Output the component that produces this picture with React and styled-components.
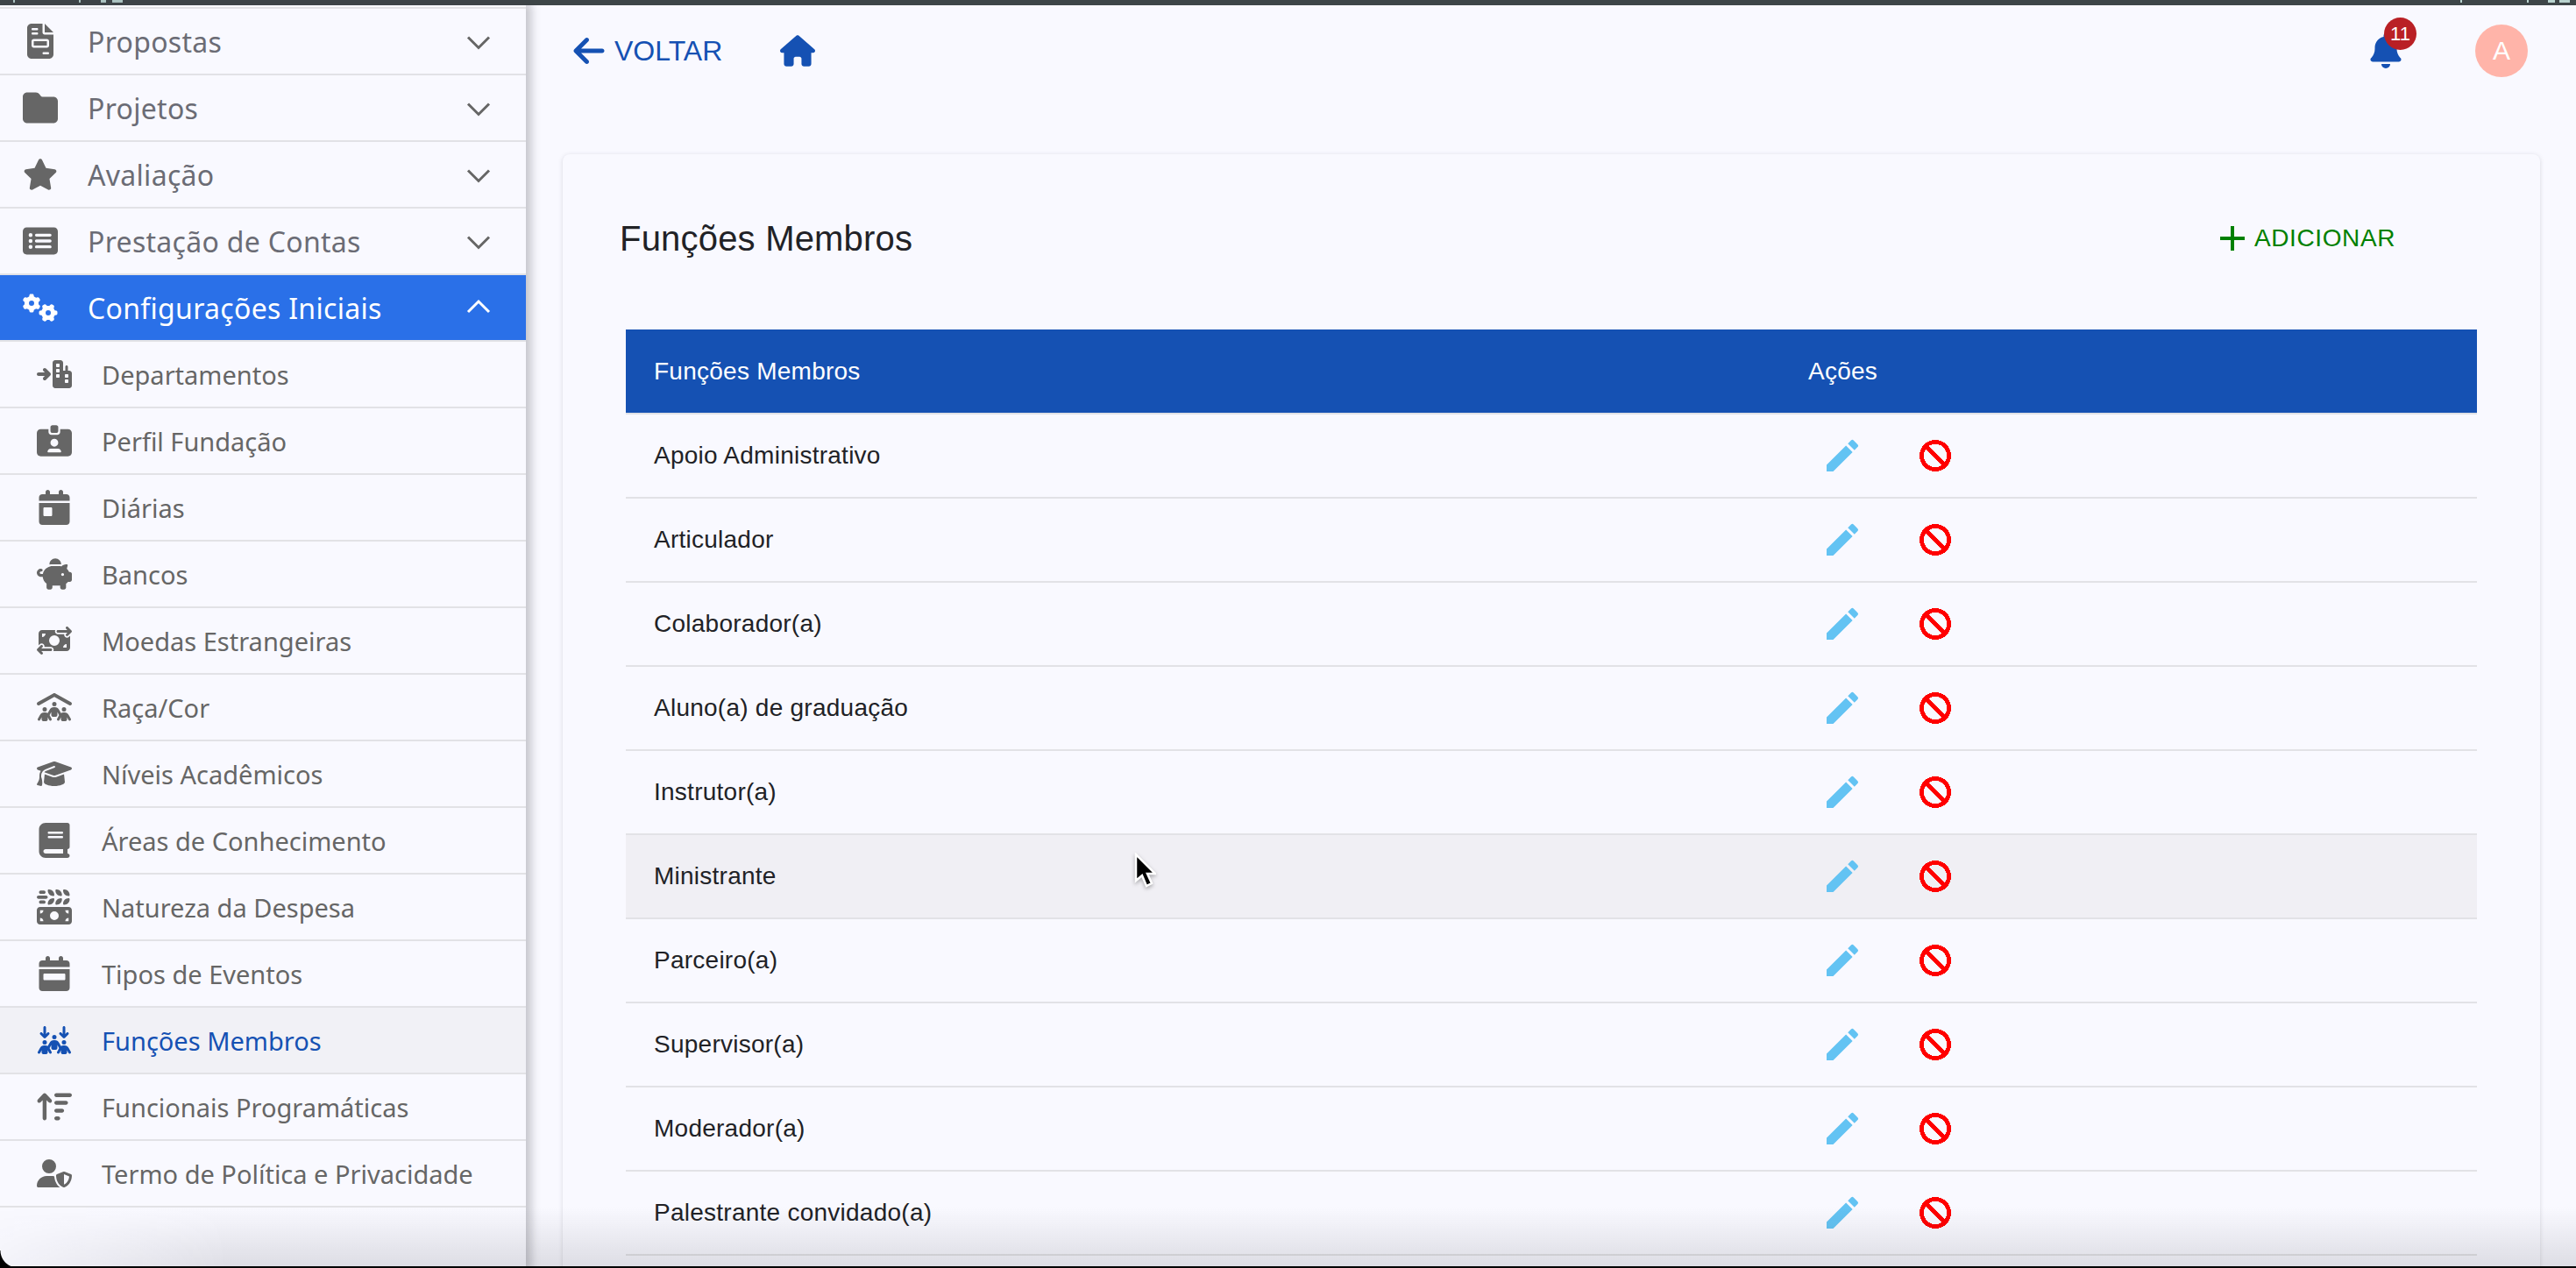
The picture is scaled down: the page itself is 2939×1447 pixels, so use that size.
import styled, { createGlobalStyle } from "styled-components";
import {
  FaFileInvoice, FaFolder, FaStar, FaRectangleList, FaGears, FaArrowRightToCity, FaIdCardClip,
  FaCalendarDay, FaPiggyBank, FaMoneyBillTransfer, FaPeopleRoof, FaGraduationCap, FaBook,
  FaMoneyBillWheat, FaCalendarWeek, FaArrowsDownToPeople, FaArrowUpWideShort, FaUserShield,
  FaArrowLeft, FaHouse, FaBell,
} from "react-icons/fa6";
import { MdEdit, MdAdd } from "react-icons/md";

const GlobalStyle = createGlobalStyle`
  html, body {
    margin: 0;
    height: 100%;
    overflow: hidden;
    background: #f9f9ff;
    font-family: "Liberation Sans", Arial, sans-serif;
  }
  #root { height: 100%; }
`;

const Frame = styled.div`
  position: relative;
  height: 100vh;
  display: flex;
  flex-direction: column;
  overflow: hidden;
`;

const TopStrip = styled.div`
  position: relative;
  flex: 0 0 6px;
  background: #3e4648;
`;

// restos do texto da janela de cima
const Speck = styled.i`
  position: absolute;
  top: 0;
  left: ${props => props.$left}px;
  width: ${props => props.$width}px;
  height: 3px;
  background: #b9d3cf;
`;

const Body = styled.div`
  flex: 1;
  min-height: 0;
  display: flex;
`;

/* menu lateral */
const Sidebar = styled.nav`
  flex: 0 0 600px;
  position: relative;
  z-index: 2;
  padding-top: 2px;
  background: #f9f9ff;
  box-shadow: 3px 0 10px 3px rgba(60, 60, 70, 0.28);
  font-family: "Noto Sans", sans-serif;
`;

const Row = styled.div`
  display: flex;
  align-items: center;
  height: 74px;
  border-top: ${props => (props.$first ? "2px solid #e2e2e6" : "none")};
  border-bottom: 2px solid #e2e2e6;
  padding-left: ${props => (props.$sub ? "42px" : "26px")};
  background: ${props => (props.$open ? "#2a70e8" : props.$current ? "#f1f1f6" : "transparent")};
  color: ${props => (props.$open ? "#fff" : props.$current ? "#1551b3" : props.$sub ? "#666" : "#6b6c75")};
`;

const RowIcon = styled.span`
  flex: 0 0 40px;
  height: 40px;
  display: flex;
  align-items: center;
  justify-content: center;
  margin-right: 34px;
  color: ${props => (props.$open ? "#fff" : props.$current ? "#1551b3" : "#666")};
  svg { width: 40px; height: 40px; }
`;

const RowLabel = styled.span`
  flex: 1;
  font-size: ${props => (props.$sub ? "29px" : "32px")};
  letter-spacing: ${props => (props.$sub ? "0" : "0.3px")};
  white-space: nowrap;
`;

const Chevron = styled.svg`
  flex: 0 0 48px;
  width: 48px;
  height: 48px;
  margin-right: 30px;
  fill: none;
  stroke: ${props => (props.$open ? "#fff" : "#666")};
  stroke-width: 3;
`;

/* conteudo */
const Main = styled.main`
  flex: 1;
  min-width: 0;
  padding: 0 41px 0 42px;
  background: #f9f9ff;
`;

const TopBar = styled.header`
  display: flex;
  align-items: center;
  height: 104px;
  margin-bottom: 66px;
  padding-left: 10px;
  color: #1551b3;
`;

const BackLink = styled.a`
  display: flex;
  align-items: center;
  gap: 9px;
  font-size: 32px;
  color: #1551b3;
  svg { width: 40px; height: 40px; }
`;

const HomeLink = styled.a`
  display: flex;
  margin-left: 66px;
  color: #1551b3;
  svg { width: 40px; height: 40px; }
`;

const BellWrap = styled.div`
  position: relative;
  display: flex;
  margin-left: auto;
  margin-right: 82px;
  svg { width: 40px; height: 40px; }
`;

const Badge = styled.span`
  position: absolute;
  top: -18px;
  left: 18px;
  width: 37px;
  height: 37px;
  border-radius: 50%;
  background: #b92025;
  color: #fff;
  font-size: 22px;
  display: flex;
  align-items: center;
  justify-content: center;
`;

const Avatar = styled.div`
  width: 60px;
  height: 60px;
  margin-right: 14px;
  border-radius: 50%;
  background: #ffb4a9;
  color: #fff;
  font-size: 30px;
  display: flex;
  align-items: center;
  justify-content: center;
`;

const Card = styled.section`
  border-radius: 8px;
  padding-bottom: 60px;
  background: #f9f9ff;
  box-shadow: 0 1px 5px rgba(60, 60, 80, 0.18);
`;

const CardHeader = styled.div`
  display: flex;
  align-items: center;
  justify-content: space-between;
  height: 192px;
  margin-bottom: 8px;
  padding: 0 165px 0 65px;
`;

const Title = styled.h2`
  margin: 0;
  font-size: 40px;
  font-weight: 400;
  letter-spacing: 0.2px;
  color: #212226;
`;

const AddButton = styled.button`
  display: flex;
  align-items: center;
  gap: 1px;
  border: 0;
  padding: 0;
  background: none;
  font: inherit;
  font-size: 28px;
  letter-spacing: 0.6px;
  color: #008000;
  svg { width: 48px; height: 48px; }
`;

const TableWrap = styled.div`
  padding: 0 72px;
`;

const Table = styled.table`
  width: 100%;
  table-layout: fixed;
  border-collapse: collapse;
  font-size: 28px;
  letter-spacing: 0.25px;
  color: #212226;
`;

const HeadCell = styled.th`
  box-sizing: border-box;
  height: 96px;
  padding: 0 0 0 32px;
  background: #1551b3;
  border-bottom: 2px solid #dfe0e6;
  color: #fff;
  font-weight: 400;
  text-align: left;
  width: ${props => props.$width || "auto"};
`;

const BodyRow = styled.tr`
  background: ${props => (props.$hover ? "#f0eff4" : "transparent")};
`;

const Cell = styled.td`
  height: 94px;
  padding: 0 0 0 32px;
  border-bottom: 2px solid #e2e2e6;
`;

const Actions = styled.div`
  display: flex;
  align-items: center;
  gap: 64px;
  padding-left: 15px;
  svg { display: block; }
`;

const EditIcon = styled(MdEdit)`
  width: 48px;
  height: 48px;
  color: #63c3f3;
`;

const BlockSvg = styled.svg`
  width: 36px;
  height: 36px;
`;

const BottomFade = styled.div`
  position: absolute;
  left: 0;
  right: 0;
  bottom: 2px;
  height: 68px;
  z-index: 3;
  pointer-events: none;
  background: linear-gradient(to bottom, rgba(40, 40, 50, 0), rgba(40, 40, 50, 0.13));
  mask-image: linear-gradient(to right, rgba(0, 0, 0, 0.2), #000 260px);
`;

const BottomLine = styled.div`
  position: absolute;
  left: 0;
  right: 0;
  bottom: 0;
  height: 2px;
  z-index: 4;
  background: #000;
`;

const Corner = styled.div`
  position: absolute;
  bottom: 0;
  left: 0;
  width: 20px;
  height: 20px;
  z-index: 4;
  background: radial-gradient(circle at 100% 0, transparent 19px, #000 20px);
`;

const Cursor = styled.svg`
  position: absolute;
  left: 1293px;
  top: 973px;
  width: 26px;
  height: 40px;
  z-index: 5;
  filter: drop-shadow(0 2px 2px rgba(0, 0, 0, 0.3));
`;

const BlockIcon = () => (
  <BlockSvg viewBox="0 0 36 36" shapeRendering="crispEdges">
    <circle cx="18" cy="18" r="15.6" fill="none" stroke="#f00" strokeWidth="4.8" />
    <line x1="7" y1="7" x2="29" y2="29" stroke="#f00" strokeWidth="4.8" />
  </BlockSvg>
);

const menu = [
  { label: "Propostas", icon: FaFileInvoice },
  { label: "Projetos", icon: FaFolder },
  { label: "Avaliação", icon: FaStar },
  { label: "Prestação de Contas", icon: FaRectangleList },
  { label: "Configurações Iniciais", icon: FaGears, open: true },
];

const submenu = [
  { label: "Departamentos", icon: FaArrowRightToCity },
  { label: "Perfil Fundação", icon: FaIdCardClip },
  { label: "Diárias", icon: FaCalendarDay },
  { label: "Bancos", icon: FaPiggyBank },
  { label: "Moedas Estrangeiras", icon: FaMoneyBillTransfer },
  { label: "Raça/Cor", icon: FaPeopleRoof },
  { label: "Níveis Acadêmicos", icon: FaGraduationCap },
  { label: "Áreas de Conhecimento", icon: FaBook },
  { label: "Natureza da Despesa", icon: FaMoneyBillWheat },
  { label: "Tipos de Eventos", icon: FaCalendarWeek },
  { label: "Funções Membros", icon: FaArrowsDownToPeople, current: true },
  { label: "Funcionais Programáticas", icon: FaArrowUpWideShort },
  { label: "Termo de Política e Privacidade", icon: FaUserShield },
];

const funcoes = [
  "Apoio Administrativo",
  "Articulador",
  "Colaborador(a)",
  "Aluno(a) de graduação",
  "Instrutor(a)",
  "Ministrante",
  "Parceiro(a)",
  "Supervisor(a)",
  "Moderador(a)",
  "Palestrante convidado(a)",
];

const specks = [
  [15, 2], [90, 2], [115, 6], [128, 12],
  [2807, 2], [2883, 2], [2907, 8], [2920, 12],
];

const App = () => (
  <Frame>
    <GlobalStyle />
    <TopStrip>
      {specks.map(([left, width]) => (
        <Speck key={left} $left={left} $width={width} />
      ))}
    </TopStrip>
    <Body>
      <Sidebar>
        {menu.map((item, index) => (
          <Row key={item.label} $first={index === 0} $open={item.open}>
            <RowIcon $open={item.open}><item.icon /></RowIcon>
            <RowLabel>{item.label}</RowLabel>
            <Chevron viewBox="0 0 48 48" $open={item.open}>
              <polyline points={item.open ? "12,29 24,17 36,29" : "12,19.5 24,31.5 36,19.5"} />
            </Chevron>
          </Row>
        ))}
        {submenu.map(item => (
          <Row key={item.label} $sub $current={item.current}>
            <RowIcon $current={item.current}><item.icon /></RowIcon>
            <RowLabel $sub>{item.label}</RowLabel>
          </Row>
        ))}
      </Sidebar>
      <Main>
        <TopBar>
          <BackLink><FaArrowLeft />VOLTAR</BackLink>
          <HomeLink><FaHouse /></HomeLink>
          <BellWrap>
            <FaBell />
            <Badge>11</Badge>
          </BellWrap>
          <Avatar>A</Avatar>
        </TopBar>
        <Card>
          <CardHeader>
            <Title>Funções Membros</Title>
            <AddButton><MdAdd />ADICIONAR</AddButton>
          </CardHeader>
          <TableWrap>
            <Table>
              <thead>
                <tr>
                  <HeadCell $width="1317px">Funções Membros</HeadCell>
                  <HeadCell>Ações</HeadCell>
                </tr>
              </thead>
              <tbody>
                {funcoes.map(funcao => (
                  <BodyRow key={funcao} $hover={funcao === "Ministrante"}>
                    <Cell>{funcao}</Cell>
                    <Cell>
                      <Actions>
                        <EditIcon />
                        <BlockIcon />
                      </Actions>
                    </Cell>
                  </BodyRow>
                ))}
              </tbody>
            </Table>
          </TableWrap>
        </Card>
      </Main>
    </Body>
    <BottomFade />
    <BottomLine />
    <Corner />
    <Cursor viewBox="0 0 26 40">
      <path d="M3 2 L3 32 L10 26 L15 38 L21 35 L16 24 L25 24 Z" fill="#000" stroke="#fff" strokeWidth="2.5" />
    </Cursor>
  </Frame>
);

export default App;
